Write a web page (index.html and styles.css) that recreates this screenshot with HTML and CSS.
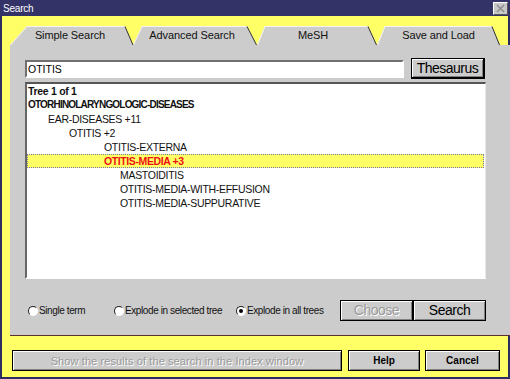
FILE: index.html
```html
<!DOCTYPE html>
<html>
<head>
  <title>Search</title>
  <link rel="stylesheet" href="styles.css">
</head>
<body>
  <div class="window">
    <div class="titlebar">
      <span class="title">Search</span>
      <span class="close">
        <svg width="11" height="9" viewBox="0 0 11 9"><path d="M2 1 L9 8 M9 1 L2 8" stroke="#8a8a8a" stroke-width="1.4" fill="none"/></svg>
      </span>
    </div>

    <div class="frame">
      <div class="tabs">
        <!-- tab outlines drawn behind the labels -->
        <svg class="tab-shapes" width="490" height="19" viewBox="0 0 490 19">
          <g fill="#cccccc">
            <polygon points="0,19 17,0 115,0 123,19"/>
            <polygon points="123,19 132,0 237,0 247,19"/>
            <polygon points="247,19 255,0 358,0 367,19"/>
            <polygon points="367,19 375,0 482,0 490,19"/>
          </g>
          <g stroke="#f4f4f4" stroke-width="1" fill="none">
            <path d="M0.5 19 L17 0.5 L115 0.5"/>
            <path d="M123.5 19 L132 0.5 L237 0.5"/>
            <path d="M247.5 19 L255 0.5 L358 0.5"/>
            <path d="M367.5 19 L375 0.5 L482 0.5"/>
          </g>
          <g stroke="#333333" stroke-width="1" fill="none">
            <path d="M115 0.5 L123 19"/>
            <path d="M237 0.5 L246.5 19"/>
            <path d="M358 0.5 L366.5 19"/>
            <path d="M482 0.5 L489.5 19"/>
          </g>
        </svg>
        <div class="tab tab-simple">Simple Search</div>
        <div class="tab tab-advanced">Advanced Search</div>
        <div class="tab tab-mesh">MeSH</div>
        <div class="tab tab-save">Save and Load</div>
      </div>

      <div class="panel">
        <div class="search-row">
          <input type="text" class="term" value="OTITIS">
          <button class="btn big thesaurus">Thesaurus</button>
        </div>

        <div class="tree">
          <div class="row bold tree-label">Tree 1 of 1</div>
          <div class="row bold root">OTORHINOLARYNGOLOGIC-DISEASES</div>
          <div class="row lvl1">EAR-DISEASES +11</div>
          <div class="row lvl2">OTITIS +2</div>
          <div class="row lvl3">OTITIS-EXTERNA</div>
          <div class="row lvl3 selected">OTITIS-MEDIA +3</div>
          <div class="row lvl4">MASTOIDITIS</div>
          <div class="row lvl4">OTITIS-MEDIA-WITH-EFFUSION</div>
          <div class="row lvl4">OTITIS-MEDIA-SUPPURATIVE</div>
        </div>

        <div class="options">
          <label class="radio opt-single"><span class="dot"></span>Single term</label>
          <label class="radio opt-selected"><span class="dot"></span>Explode in selected tree</label>
          <label class="radio opt-all"><span class="dot checked"></span>Explode in all trees</label>
          <div class="actions">
            <button class="btn big disabled choose">Choose</button>
            <button class="btn big search">Search</button>
          </div>
        </div>
      </div>

      <div class="footer">
        <button class="btn disabled show">Show the results of the search in the Index window</button>
        <button class="btn strong help">Help</button>
        <button class="btn strong cancel">Cancel</button>
      </div>
    </div>
  </div>
</body>
</html>
```

FILE: styles.css
```css
body {
  margin: 0;
  padding: 0;
  font-family: "Liberation Sans", Arial, sans-serif;
  background: #ffffff;
}

.window {
  width: 510px;
  height: 379px;
  display: flex;
  flex-direction: column;
}

.titlebar {
  height: 16px;
  background-color: #333368;
  display: flex;
  align-items: center;
  justify-content: space-between;
  padding: 0 2px 0 3px;
}

.title {
  color: #ffffff;
  font-size: 10px;
  letter-spacing: -0.2px;
}

.close {
  width: 13px;
  height: 11px;
  background-color: #c8c8c8;
  border: 1px solid #ffffff;
  border-right-color: #555555;
  border-bottom-color: #555555;
  display: flex;
  align-items: center;
  justify-content: center;
}

.frame {
  flex: 1;
  background-color: #ffff66;
  border: 2px solid #2c2c60;
  border-top: none;
  padding: 0 6px 0 8px;
}

/* tabs */
.tabs {
  position: relative;
  width: 490px;
  height: 19px;
  margin-top: 10px;
  display: flex;
}

.tab-shapes {
  position: absolute;
  top: 0;
  left: 0;
}

.tab {
  position: relative;
  font-size: 11px;
  color: #111111;
  line-height: 19px;
  text-align: center;
  letter-spacing: -0.1px;
}

.tab-simple { width: 123px; padding-right: 3px; box-sizing: border-box; }
.tab-advanced { width: 124px; padding-right: 6px; box-sizing: border-box; }
.tab-mesh { width: 120px; padding-right: 8px; box-sizing: border-box; }
.tab-save { width: 123px; }

/* main panel */
.panel {
  width: 490px;
  height: 277px;
  background-color: #cccccc;
  border-right: 2px solid #55556a;
  border-bottom: 1px solid #5a3030;
  padding: 13px 14px 0 15px;
  box-sizing: content-box;
}

.search-row {
  display: flex;
  align-items: center;
  gap: 7px;
  height: 21px;
}

.term {
  width: 379px;
  height: 18px;
  box-sizing: border-box;
  margin: 0;
  padding: 0 1px;
  font-family: "Liberation Sans", Arial, sans-serif;
  font-size: 10.5px;
  color: #000000;
  background: #ffffff;
  border: 2px solid #ffffff;
  border-top-color: #707070;
  border-left-color: #707070;
  outline: none;
}

.btn {
  margin: 0;
  padding: 0;
  background-color: #cccccc;
  border: 1px solid #000000;
  box-shadow: inset 1px 1px 0 #ffffff, inset -1px -1px 0 #808080;
  font-family: "Liberation Sans", Arial, sans-serif;
  color: #000000;
  cursor: pointer;
}

.big {
  font-size: 14px;
  letter-spacing: -0.5px;
}

.thesaurus {
  width: 74px;
  height: 21px;
  border-width: 1px 2px 2px 1px;
}

.tree {
  width: 461px;
  height: 197px;
  margin-top: 3px;
  box-sizing: border-box;
  background: #ffffff;
  border: 2px solid #ffffff;
  border-top-color: #555555;
  border-left-color: #666666;
  border-right: 1px solid #e8e8e8;
  padding-top: 0;
}

.row {
  height: 14px;
  line-height: 14px;
  font-size: 10.5px;
  color: #111111;
  padding-left: 1px;
  white-space: nowrap;
  letter-spacing: -0.3px;
}

.bold {
  font-weight: bold;
}

.tree-label { letter-spacing: -0.3px; }
.root { font-size: 10px; letter-spacing: -0.8px; }

.lvl1 { padding-left: 21px; }
.lvl2 { padding-left: 42px; }
.lvl3 { padding-left: 77px; }
.lvl4 { padding-left: 93px; }

.selected {
  background-color: #ffff66;
  border: 1px dotted #7777aa;
  line-height: 12px;
  height: 12px;
  margin-right: 1px;
  padding-left: 76px;
  color: #ee1111;
  font-weight: bold;
  letter-spacing: -0.4px;
}

/* radio row */
.options {
  display: flex;
  align-items: center;
  margin-top: 21px;
  height: 20px;
  font-size: 10px;
  letter-spacing: -0.4px;
  color: #111111;
}

.radio {
  display: flex;
  align-items: center;
  gap: 1px;
  padding-top: 1px;
}

.opt-single { margin-left: 3px; width: 86px; }
.opt-selected { width: 122px; }
.opt-all { width: 104px; }

.dot {
  width: 10px;
  height: 10px;
  border-radius: 50%;
  box-sizing: border-box;
  background: #ffffff;
  border: 1px solid #ffffff;
  border-top-color: #222222;
  border-left-color: #222222;
  display: flex;
  align-items: center;
  justify-content: center;
}

.dot.checked::after {
  content: "";
  width: 4px;
  height: 4px;
  border-radius: 50%;
  background: #000000;
}

.actions {
  display: flex;
}

.choose,
.search {
  width: 73px;
  height: 21px;
}

.disabled {
  color: #9a9a9a;
  text-shadow: 1px 1px 0 #ffffff;
}

/* bottom buttons */
.footer {
  display: flex;
  margin-top: 14px;
  padding-left: 2px;
  gap: 6px;
}

.show {
  width: 330px;
  height: 21px;
  font-size: 11px;
  letter-spacing: 0.1px;
}

.strong {
  font-size: 10px;
  font-weight: bold;
  height: 21px;
}

.help { width: 72px; }
.cancel { width: 75px; margin-left: -1px; }
```
